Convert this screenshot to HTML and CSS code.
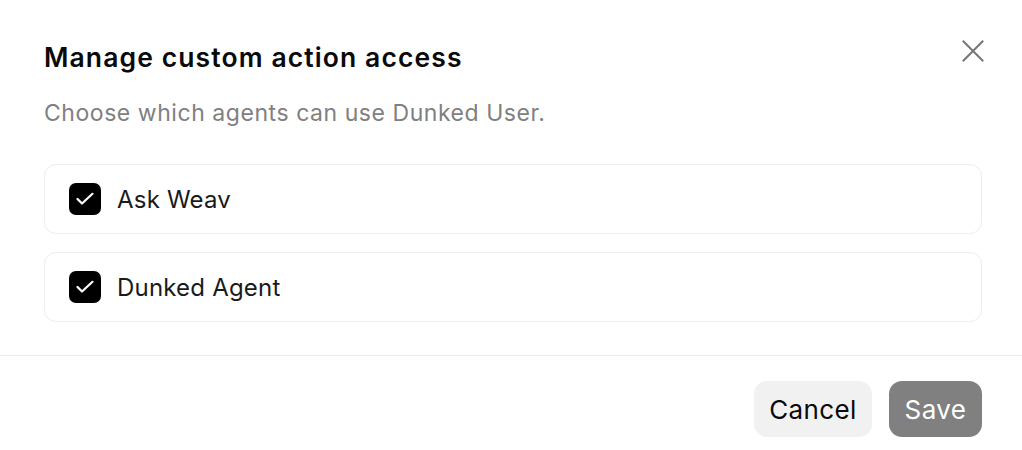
FILE: index.html
```html
<!DOCTYPE html>
<html>
<head>
<meta charset="utf-8">
<link rel="stylesheet" href="styles.css">
</head>
<body>
<div class="modal">
  <div class="body">
    <div class="header">
      <h1 class="title">Manage custom action access</h1>
      <button class="close" aria-label="Close">
        <svg width="24" height="24" viewBox="0 0 24 24"><path d="M2.5 2.5L21.5 21.5M21.5 2.5L2.5 21.5" stroke="#767676" stroke-width="2" fill="none" stroke-linecap="square"/></svg>
      </button>
    </div>
    <p class="subtitle">Choose which agents can use Dunked User.</p>
    <div class="list">
      <label class="row">
        <span class="check"><svg width="32" height="32" viewBox="0 0 32 32"><path d="M8.5 16L13 20.5L23.5 10.8" stroke="#fff" stroke-width="2.2" fill="none" stroke-linecap="round" stroke-linejoin="round"/></svg></span>
        <span class="label">Ask Weav</span>
      </label>
      <label class="row">
        <span class="check"><svg width="32" height="32" viewBox="0 0 32 32"><path d="M8.5 16L13 20.5L23.5 10.8" stroke="#fff" stroke-width="2.2" fill="none" stroke-linecap="round" stroke-linejoin="round"/></svg></span>
        <span class="label">Dunked Agent</span>
      </label>
    </div>
  </div>
  <div class="footer">
    <button class="btn cancel">Cancel</button>
    <button class="btn save">Save</button>
  </div>
</div>
</body>
</html>
```
FILE: styles.css
```css
* { box-sizing: border-box; }
html, body { margin: 0; padding: 0; background: #fff; }
body { font-family: Inter, "Noto Sans", sans-serif; color: #111; width: 1022px; height: 450px; overflow: hidden; }
.modal { width: 1022px; }
.body { padding: 37px 40px 33px 44px; }
.header { display: flex; justify-content: space-between; align-items: flex-start; }
.title { margin: 0; font-size: 26.5px; font-weight: 560; line-height: 40px; color: #0a0a0a; letter-spacing: 1.1px; }
.close { background: none; border: 0; padding: 0; margin: 2px -3px 0 0; width: 24px; height: 24px; display: flex; }
.subtitle { margin: 21px 0 0 0; font-size: 23px; line-height: 30px; color: #808080; letter-spacing: 0.55px; }
.list { margin-top: 36px; display: flex; flex-direction: column; gap: 18px; }
.row { height: 70px; border: 1.5px solid #ededed; border-radius: 12px; display: flex; align-items: center; padding-left: 24px; gap: 16px; }
.check { width: 32px; height: 32px; border-radius: 7px; background: #000; display: flex; }
.label { font-size: 24px; color: #1a1a1a; letter-spacing: 0.2px; }
.footer { border-top: 1.5px solid #ebebeb; padding: 25px 40px 0 0; display: flex; justify-content: flex-end; gap: 17px; }
.btn { height: 56px; border: 0; border-radius: 13px; font-family: Inter, "Noto Sans", sans-serif; font-size: 26px; letter-spacing: 0.4px; padding: 0; }
.cancel { background: #f1f1f1; color: #0a0a0a; width: 118px; }
.save { background: #808080; color: #fff; width: 93px; }
```
